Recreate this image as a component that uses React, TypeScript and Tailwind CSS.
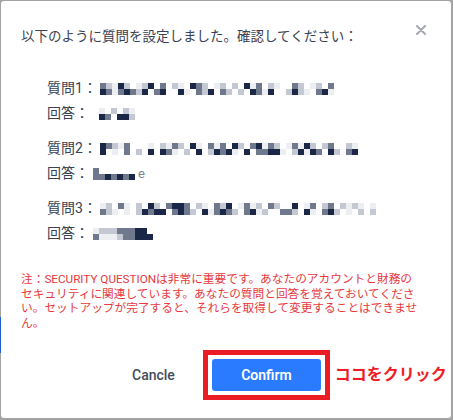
import React from "react";

const shades = [
  "bg-transparent",
  "bg-[#eceef2]",
  "bg-[#c4c8d2]",
  "bg-[#6f788d]",
  "bg-[#1a2746]",
];

const blurred = {
  q1: ["321420124030210432012020413021003201203", "431343240340041032403202043140024210341"],
  a1: ["01020210", "04304420"],
  q2: ["4321300010213204103130420341320131420230021", "4010302040431020402434104033441024143042034"],
  a2: ["30000000", "33434340"],
  q3: ["1203102042034430210324013120320040130230212101", "3210102434403432041343203412003320410342010202"],
  a3: ["12223334400", "31112334440"],
};

function Mosaic({ rows }: { rows: string[] }) {
  return (
    <div className="flex flex-col">
      {rows.map((row, i) => (
        <div key={i} className="flex">
          {row.split("").map((c, j) => (
            <div key={j} className={`h-[6px] w-[6px] ${shades[Number(c)]}`} />
          ))}
        </div>
      ))}
    </div>
  );
}

function QA({ n, q, a, tail }: { n: number; q: string[]; a: string[]; tail?: string }) {
  return (
    <div className="flex flex-col">
      <div className="flex items-center leading-[25px]">
        <span className="w-[53px]">質問{n}：</span>
        <Mosaic rows={q} />
      </div>
      <div className="flex items-center leading-[25px]">
        <span className="w-[46px]">回答：</span>
        <Mosaic rows={a} />
        {tail && <span className="-ml-[3px] text-[13px] text-[#7c8396]">{tail}</span>}
      </div>
    </div>
  );
}

export default function App() {
  return (
    <div
      className="flex h-[420px] w-[453px] bg-[#a3a3a3]"
      style={{ fontFamily: 'Roboto, "Noto Sans CJK JP", sans-serif' }}
    >
      <div className="flex w-[1px] flex-col">
        <div className="h-[317px]" />
        <div className="h-[36px] bg-[#1f5ccf]" />
      </div>
      <div className="mt-[1px] flex h-[417px] w-[450px] flex-col rounded-[3px] bg-white">
        <div className="flex items-start justify-between pl-[20px] pr-[25px] pt-[25px]">
          <h2 className="text-[13.5px] leading-[20px] text-[#3a4152]">
            以下のように質問を設定しました。確認してください：
          </h2>
          <svg width="10" height="10" viewBox="0 0 10 10" className="mt-[-1px]">
            <path d="M1 1L9 9M9 1L1 9" stroke="#a4a8b1" strokeWidth="2" strokeLinecap="round" />
          </svg>
        </div>

        <div className="mt-[30px] flex flex-col gap-[10px] pl-[46px] text-[14px] text-[#3a4152]">
          <QA n={1} q={blurred.q1} a={blurred.a1} />
          <QA n={2} q={blurred.q2} a={blurred.a2} tail="e" />
          <QA n={3} q={blurred.q3} a={blurred.a3} />
        </div>

        <p className="mt-[26px] whitespace-nowrap pl-[20px] text-[11.7px] leading-[14.6px] text-[#e8383d]">
          注：SECURITY QUESTIONは非常に重要です。あなたのアカウントと財務の
          <br />
          セキュリティに関連しています。あなたの質問と回答を覚えておいてくださ
          <br />
          い。セットアップが完了すると、それらを取得して変更することはできませ
          <br />
          ん。
        </p>

        <div className="mt-[20px] flex items-center pl-[131px]">
          <button className="text-[14px] font-medium text-[#454c5c]">Cancle</button>
          <div className="ml-[28px] border-[5px] border-[#ec1c24] p-[4px]">
            <button className="h-[32px] w-[109px] rounded-[3px] bg-[#2a7bff] text-[14px] font-semibold text-white">
              Confirm
            </button>
          </div>
          <span className="ml-[5px] text-[16px] font-bold text-[#ee1c25]">ココをクリック</span>
        </div>
      </div>
    </div>
  );
}
